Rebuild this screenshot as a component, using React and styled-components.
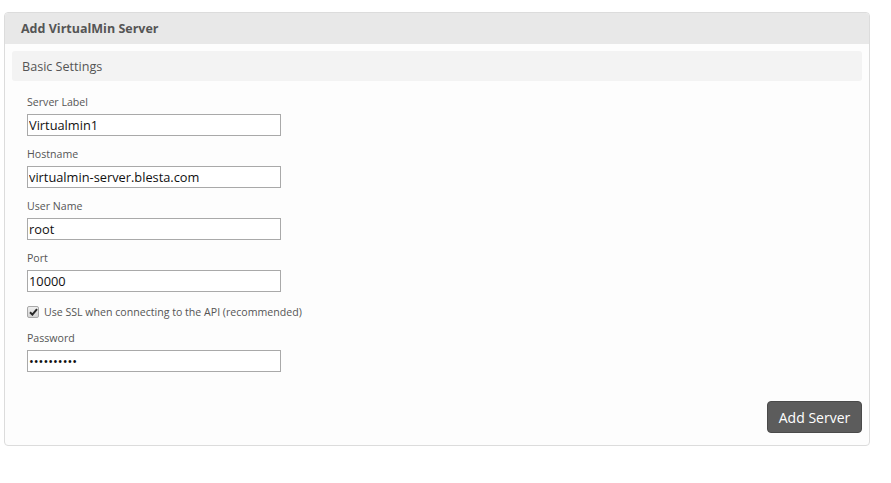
import styled, { createGlobalStyle } from "styled-components";

const Global = createGlobalStyle`
  body {
    margin: 0;
    background: #ffffff;
    font-family: "Open Sans", "Liberation Sans", sans-serif;
  }
`;

const Page = styled.div`
  padding: 12px 0 0 4px;
`;

const Panel = styled.div`
  width: 864px;
  border: 1px solid #dcdcdc;
  border-radius: 4px;
  background: #fdfdfd;
  overflow: hidden;
`;

const PanelHeader = styled.div`
  height: 31px;
  display: flex;
  align-items: center;
  padding-left: 16px;
  background: #e8e8e8;
  font-size: 12.5px;
  font-weight: 700;
  color: #555555;
`;

const PanelBody = styled.div`
  padding: 7px 7px 12px 7px;
`;

const SectionBand = styled.div`
  height: 30px;
  display: flex;
  align-items: center;
  padding-left: 10px;
  border-radius: 3px;
  background: #f3f3f3;
  font-size: 12.6px;
  color: #555555;
`;

const Fields = styled.div`
  display: flex;
  flex-direction: column;
  padding: 13px 0 0 15px;
`;

const Field = styled.div`
  display: flex;
  flex-direction: column;
  gap: 4px;
  margin-bottom: ${(p) => (p.$last ? "0" : "10px")};
`;

const Label = styled.label`
  font-size: 10.6px;
  line-height: 16px;
  color: #555555;
`;

const Input = styled.input`
  box-sizing: border-box;
  width: 254px;
  height: 22px;
  padding: 0 1px;
  border: 1px solid #a9a9a9;
  background: #ffffff;
  font-family: "Open Sans", "Liberation Sans", sans-serif;
  font-size: 12.8px;
  color: #111111;
  outline: none;
`;

const CheckRow = styled.label`
  display: flex;
  align-items: center;
  gap: 5px;
  height: 20px;
  margin-bottom: 8px;
  font-size: 10.6px;
  color: #555555;
`;

const Box = styled.span`
  box-sizing: border-box;
  width: 12px;
  height: 12px;
  display: flex;
  align-items: center;
  justify-content: center;
  border: 1px solid #a8a8a8;
  border-radius: 2px;
  background: linear-gradient(#eeeeee, #d4d4d4);
`;

const Actions = styled.div`
  display: flex;
  justify-content: flex-end;
  padding-top: 29px;
`;

const Button = styled.button`
  width: 95px;
  height: 32px;
  border: 1px solid #4a4a4a;
  border-radius: 4px;
  background: #5c5c5c;
  color: #ffffff;
  font-family: "Open Sans", "Liberation Sans", sans-serif;
  font-size: 14px;
  cursor: pointer;
`;

const fields = [
  { label: "Server Label", value: "Virtualmin1" },
  { label: "Hostname", value: "virtualmin-server.blesta.com" },
  { label: "User Name", value: "root" },
  { label: "Port", value: "10000" },
];

export default function App() {
  return (
    <Page>
      <Global />
      <Panel>
        <PanelHeader>Add VirtualMin Server</PanelHeader>
        <PanelBody>
          <SectionBand>Basic Settings</SectionBand>
          <Fields>
            {fields.map((f) => (
              <Field key={f.label}>
                <Label>{f.label}</Label>
                <Input type="text" defaultValue={f.value} />
              </Field>
            ))}
            <CheckRow>
              <Box>
                <svg width="9" height="8" viewBox="0 0 9 8">
                  <path d="M1 4.2 L3.4 6.6 L8 1.2" fill="none" stroke="#2a2a2a" strokeWidth="2" />
                </svg>
              </Box>
              Use SSL when connecting to the API (recommended)
            </CheckRow>
            <Field $last>
              <Label>Password</Label>
              <Input type="password" defaultValue="abcdefghij" />
            </Field>
          </Fields>
          <Actions>
            <Button>Add Server</Button>
          </Actions>
        </PanelBody>
      </Panel>
    </Page>
  );
}
